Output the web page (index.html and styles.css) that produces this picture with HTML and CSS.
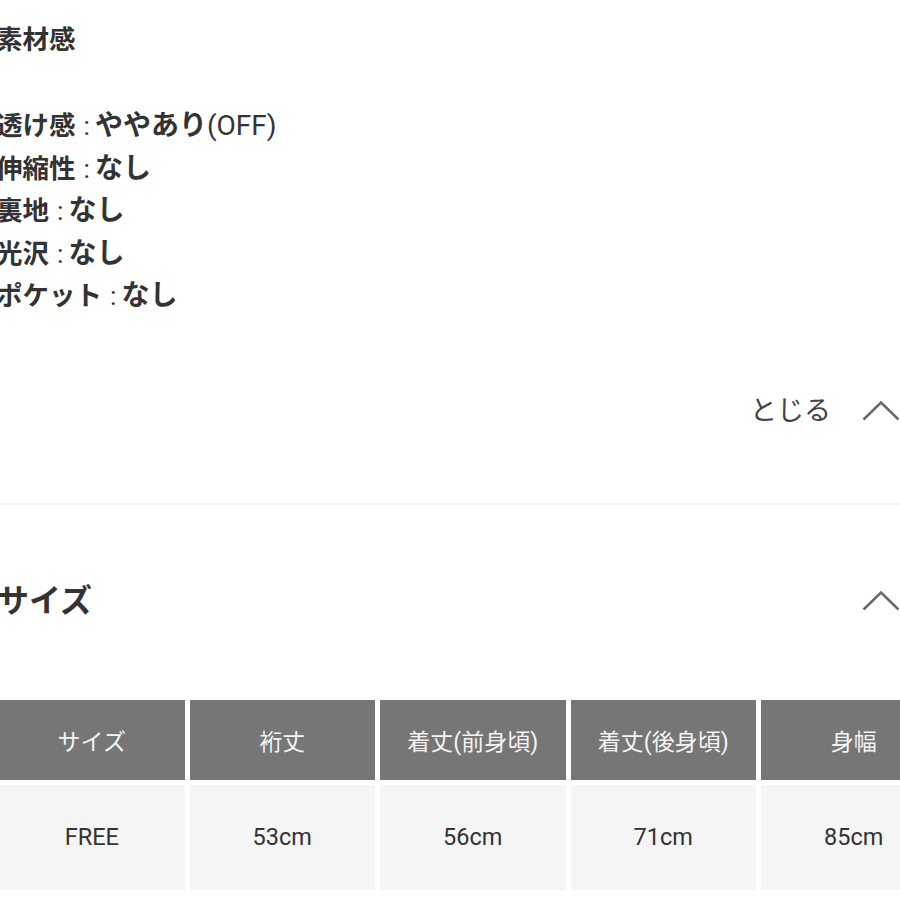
FILE: index.html
```html
<!DOCTYPE html>
<html lang="ja">
<head>
<meta charset="utf-8">
<link rel="stylesheet" href="styles.css">
</head>
<body>
<div class="page">
  <section class="detail">
    <h3 class="detail-title">素材感</h3>
    <ul class="spec-list">
      <li><b>透け感</b><span class="colon">:</span><span class="val"><b>ややあり</b>(OFF)</span></li>
      <li><b>伸縮性</b><span class="colon">:</span><span class="val"><b>なし</b></span></li>
      <li><b>裏地</b><span class="colon">:</span><span class="val"><b>なし</b></span></li>
      <li><b>光沢</b><span class="colon">:</span><span class="val"><b>なし</b></span></li>
      <li><b>ポケット</b><span class="colon">:</span><span class="val"><b>なし</b></span></li>
    </ul>
    <div class="close-row">
      <span class="close-label">とじる</span>
      <svg class="chevron" width="38" height="22" viewBox="0 0 38 22"><polyline points="1.5,19.5 19,2.5 36.5,19.5" fill="none" stroke="#6a6a6a" stroke-width="2.6"/></svg>
    </div>
  </section>
  <hr class="divider">
  <section class="size">
    <div class="size-head">
      <h2 class="size-title">サイズ</h2>
      <svg class="chevron" width="38" height="22" viewBox="0 0 38 22"><polyline points="1.5,19.5 19,2.5 36.5,19.5" fill="none" stroke="#6a6a6a" stroke-width="2.6"/></svg>
    </div>
    <div class="size-table">
      <div class="th">サイズ</div>
      <div class="th">裄丈</div>
      <div class="th">着丈(前身頃)</div>
      <div class="th">着丈(後身頃)</div>
      <div class="th">身幅</div>
      <div class="td">FREE</div>
      <div class="td">53cm</div>
      <div class="td">56cm</div>
      <div class="td">71cm</div>
      <div class="td">85cm</div>
    </div>
  </section>
</div>
</body>
</html>
```

FILE: styles.css
```css
html, body {
  margin: 0;
  padding: 0;
  background: #ffffff;
}
body {
  width: 900px;
  overflow: hidden;
  font-family: Roboto, "Noto Sans CJK JP", sans-serif;
  color: #333333;
}
.page {
  width: 900px;
}
.detail-title {
  margin: 20px 0 0 -4px;
  font-size: 26.5px;
  line-height: 40px;
  font-weight: 700;
  color: #333;
}
.spec-list {
  list-style: none;
  margin: 45px 0 0 -4px;
  padding: 0;
  font-size: 26.5px;
  line-height: 42.5px;
  color: #333;
}
.spec-list b {
  font-weight: 700;
}
.colon {
  margin: 0 5px 0 8px;
}
.val {
  font-size: 28px;
}
.close-row {
  display: flex;
  justify-content: flex-end;
  align-items: center;
  gap: 31px;
  height: 40px;
  margin-top: 73px;
}
.close-label {
  font-size: 27px;
  line-height: 40px;
  color: #444;
}
.chevron {
  display: block;
  flex: none;
}
.divider {
  border: none;
  height: 2px;
  background: #f3f3f3;
  margin: 72px 0 0;
}
.size-head {
  display: flex;
  justify-content: space-between;
  align-items: center;
  height: 50px;
  margin-top: 71px;
}
.size-title {
  margin: 0 0 0 -3px;
  font-size: 32px;
  line-height: 50px;
  font-weight: 700;
  color: #333;
}
.size-table {
  display: grid;
  grid-template-columns: repeat(5, 185.5px);
  grid-template-rows: 80px 105px;
  column-gap: 5px;
  row-gap: 5px;
  margin: 74px 0 0 -1px;
  width: 950px;
}
.th, .td {
  display: flex;
  align-items: center;
  justify-content: center;
}
.th {
  background: #767676;
  color: #f4f4f4;
  font-size: 23px;
}
.td {
  background: #f5f5f5;
  color: #333;
  font-size: 23.5px;
}
```
